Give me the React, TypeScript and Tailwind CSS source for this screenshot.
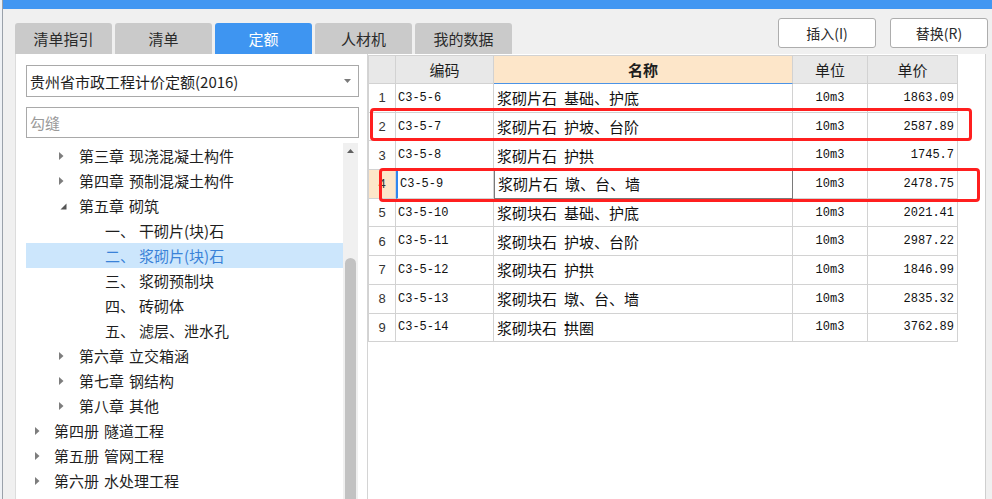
import React from "react";

type TreeNode = {
  level: 0 | 1 | 2;
  a: string;
  b: string;
  open?: boolean;
  sel?: boolean;
};

const tree: TreeNode[] = [
  { level: 1, a: "第三章", b: "现浇混凝土构件" },
  { level: 1, a: "第四章", b: "预制混凝土构件" },
  { level: 1, a: "第五章", b: "砌筑", open: true },
  { level: 2, a: "一、", b: "干砌片(块)石" },
  { level: 2, a: "二、", b: "浆砌片(块)石", sel: true },
  { level: 2, a: "三、", b: "浆砌预制块" },
  { level: 2, a: "四、", b: "砖砌体" },
  { level: 2, a: "五、", b: "滤层、泄水孔" },
  { level: 1, a: "第六章", b: "立交箱涵" },
  { level: 1, a: "第七章", b: "钢结构" },
  { level: 1, a: "第八章", b: "其他" },
  { level: 0, a: "第四册", b: "隧道工程" },
  { level: 0, a: "第五册", b: "管网工程" },
  { level: 0, a: "第六册", b: "水处理工程" },
  { level: 0, a: "第七册", b: "燃气与集中供热工程" },
];

const rows = [
  ["1", "C3-5-6", "浆砌片石", "基础、护底", "10m3", "1863.09"],
  ["2", "C3-5-7", "浆砌片石", "护坡、台阶", "10m3", "2587.89"],
  ["3", "C3-5-8", "浆砌片石", "护拱", "10m3", "1745.7"],
  ["4", "C3-5-9", "浆砌片石", "墩、台、墙", "10m3", "2478.75"],
  ["5", "C3-5-10", "浆砌块石", "基础、护底", "10m3", "2021.41"],
  ["6", "C3-5-11", "浆砌块石", "护坡、台阶", "10m3", "2987.22"],
  ["7", "C3-5-12", "浆砌块石", "护拱", "10m3", "1846.99"],
  ["8", "C3-5-13", "浆砌块石", "墩、台、墙", "10m3", "2835.32"],
  ["9", "C3-5-14", "浆砌块石", "拱圈", "10m3", "3762.89"],
];

function Collapsed() {
  return (
    <svg width="5" height="8" viewBox="0 0 5 8" className="block">
      <path d="M0 0 L4.5 4 L0 8 Z" fill="#7d7d7d" />
    </svg>
  );
}

function Expanded() {
  return (
    <svg width="7" height="7" viewBox="0 0 7 7" className="block">
      <path d="M6.5 0.5 L6.5 6.5 L0.5 6.5 Z" fill="#555555" />
    </svg>
  );
}

function TreeRow({ n }: { n: TreeNode }) {
  const color = n.sel ? "text-[#3a82d8]" : "text-[#1e1e1e]";
  if (n.level === 2) {
    return (
      <div
        className={`h-[25px] flex items-center pl-[79px] whitespace-nowrap ${
          n.sel ? "bg-[#cce6fc]" : ""
        } ${color}`}
      >
        <span className="w-[34px]">{n.a}</span>
        <span>{n.b}</span>
      </div>
    );
  }
  const pad = n.level === 0 ? "pl-[9px]" : "pl-[33px]";
  const triW = n.level === 0 ? "w-[19px]" : "w-[20px]";
  return (
    <div className={`h-[25px] flex items-center whitespace-nowrap ${pad} ${color}`}>
      <div className={`${triW} flex items-center ${n.open ? "pl-[1px] pt-[2px]" : ""}`}>
        {n.open ? <Expanded /> : <Collapsed />}
      </div>
      <span>{n.a}</span>
      <span className="ml-[5px]">{n.b}</span>
    </div>
  );
}

const tabs = ["清单指引", "清单", "定额", "人材机", "我的数据"];

export default function App() {
  return (
    <div className="relative w-[992px] h-[499px] overflow-hidden flex bg-[#f0f0f0] font-['Noto_Sans_CJK_SC','Microsoft_YaHei',sans-serif] text-[15px] leading-none">
      {/* background window strip */}
      <div className="w-[3px] h-full bg-[#eef1f5] border-r border-[#9aa1aa]" />

      <div className="flex-1 flex flex-col min-w-0">
        <div className="h-[9px] bg-[#4297f2]" />
        <div className="flex-1 flex flex-col pl-[12px] pr-[4px] min-h-0">
          {/* tabs + buttons */}
          <div className="h-[45px] flex justify-between">
            <div className="self-end flex gap-[3px]">
              {tabs.map((t) => (
                <div
                  key={t}
                  className={`w-[97px] h-[31px] rounded-t-[3px] flex items-center justify-center ${
                    t === "定额"
                      ? "bg-[#3e95f1] text-white"
                      : "bg-[#cacaca] text-[#2a2a2a]"
                  }`}
                >
                  {t}
                </div>
              ))}
            </div>
            <div className="self-start mt-[9px] flex gap-[14px]">
              <div className="w-[98px] h-[30px] bg-white border border-[#adadad] rounded-[3px] flex items-center justify-center text-[14px] text-[#2a2a2a]">
                插入(I)
              </div>
              <div className="w-[98px] h-[30px] bg-white border border-[#adadad] rounded-[3px] flex items-center justify-center text-[14px] text-[#2a2a2a]">
                替换(R)
              </div>
            </div>
          </div>

          {/* main */}
          <div className="flex-1 flex min-h-0">
            {/* left panel */}
            <div className="w-[353px] bg-white border-l border-[#dcdcdc] border-r border-r-[#d4d4d4] pl-[10px] pr-[8px] flex flex-col">
              <div className="mt-[11px] h-[32px] border border-[#a9a9a9] flex items-center justify-between pl-[3px] pr-[7px] text-[#1e1e1e]">
                <span>贵州省市政工程计价定额(2016)</span>
                <svg width="7" height="4" viewBox="0 0 7 4" className="block">
                  <path d="M0 0 L7 0 L3.5 4 Z" fill="#7a7a7a" />
                </svg>
              </div>
              <div className="mt-[10px] h-[31px] border border-[#a9a9a9] flex items-center pl-[3px] text-[#9a9a9a]">
                勾缝
              </div>
              <div className="mt-[5px] flex flex-1 min-h-0 mr-[1px]">
                <div className="flex-1 overflow-hidden">
                  {tree.map((n, i) => (
                    <TreeRow key={i} n={n} />
                  ))}
                </div>
                <div className="w-[15px] bg-[#f0f0f0] flex flex-col">
                  <div className="h-[15px] flex items-center justify-center">
                    <svg width="7" height="4" viewBox="0 0 7 4" className="block">
                      <path d="M0 4 L7 4 L3.5 0 Z" fill="#606060" />
                    </svg>
                  </div>
                  <div className="h-[100px]" />
                  <div className="flex-1 mx-[2px] bg-[#c2c2c2] rounded-t-[6px]" />
                </div>
              </div>
            </div>

            {/* table panel */}
            <div className="flex-1 mr-[2px] bg-white border-r border-[#cfcfcf] pt-[1px]">
              <div className="w-[590px] border-l border-t border-[#d2d2d2] grid grid-cols-[27px_98px_299px_75px_90px]">
                {/* header */}
                <div className="h-[28px] bg-[#e8e8e8] border-r border-b border-[#d2d2d2]" />
                <div className="h-[28px] bg-[#e8e8e8] border-r border-b border-[#d2d2d2] flex items-center justify-center text-[#1e1e1e]">
                  编码
                </div>
                <div className="h-[28px] bg-[#fde6c9] border-r border-[#d2d2d2] border-b border-b-[#4b93e6] flex items-center justify-center font-bold text-[#1e1e1e]">
                  名称
                </div>
                <div className="h-[28px] bg-[#e8e8e8] border-r border-b border-[#d2d2d2] flex items-center justify-center text-[#1e1e1e]">
                  单位
                </div>
                <div className="h-[28px] bg-[#e8e8e8] border-r border-b border-[#d2d2d2] flex items-center justify-center text-[#1e1e1e]">
                  单价
                </div>

                {rows.map((r) => {
                  const sel = r[0] === "4";
                  return (
                    <React.Fragment key={r[0]}>
                      <div
                        className={`h-[28.7px] border-r border-b border-[#d2d2d2] flex items-center justify-center font-['Liberation_Sans',sans-serif] text-[13px] text-[#333] ${
                          sel ? "bg-[#fde6c9]" : ""
                        }`}
                      >
                        {r[0]}
                      </div>
                      <div
                        className={`h-[28.7px] border-r border-b border-[#d2d2d2] flex items-center pl-[2px] font-['Liberation_Mono',monospace] text-[12px] text-[#111] ${
                          sel ? "border-l-2 border-l-[#2f86f0] pl-[0px]" : ""
                        }`}
                      >
                        {r[1]}
                      </div>
                      <div
                        className={`h-[28.7px] border-r border-b flex items-center pl-[3px] whitespace-nowrap text-[#111] ${
                          sel
                            ? "border-l border-t border-[#7a7a7a] -mt-[1px] h-[29.7px] pl-[2px]"
                            : "border-[#d2d2d2]"
                        }`}
                      >
                        <span>{r[2]}</span>
                        <span className="ml-[7px]">{r[3]}</span>
                      </div>
                      <div className="h-[28.7px] border-r border-b border-[#d2d2d2] flex items-center justify-center font-['Liberation_Mono',monospace] text-[12px] text-[#111]">
                        {r[4]}
                      </div>
                      <div className="h-[28.7px] border-r border-b border-[#d2d2d2] flex items-center justify-end pr-[3px] font-['Liberation_Mono',monospace] text-[12px] text-[#111]">
                        {r[5]}
                      </div>
                    </React.Fragment>
                  );
                })}
              </div>
            </div>
          </div>
        </div>
      </div>

      {/* annotation boxes */}
      <div className="absolute left-[370px] top-[108px] w-[602px] h-[33px] border-[3px] border-[#ff1f1f] rounded-[4px]" />
      <div className="absolute left-[379px] top-[168px] w-[601px] h-[34px] border-[3px] border-[#ff1f1f] rounded-[4px]" />
    </div>
  );
}
